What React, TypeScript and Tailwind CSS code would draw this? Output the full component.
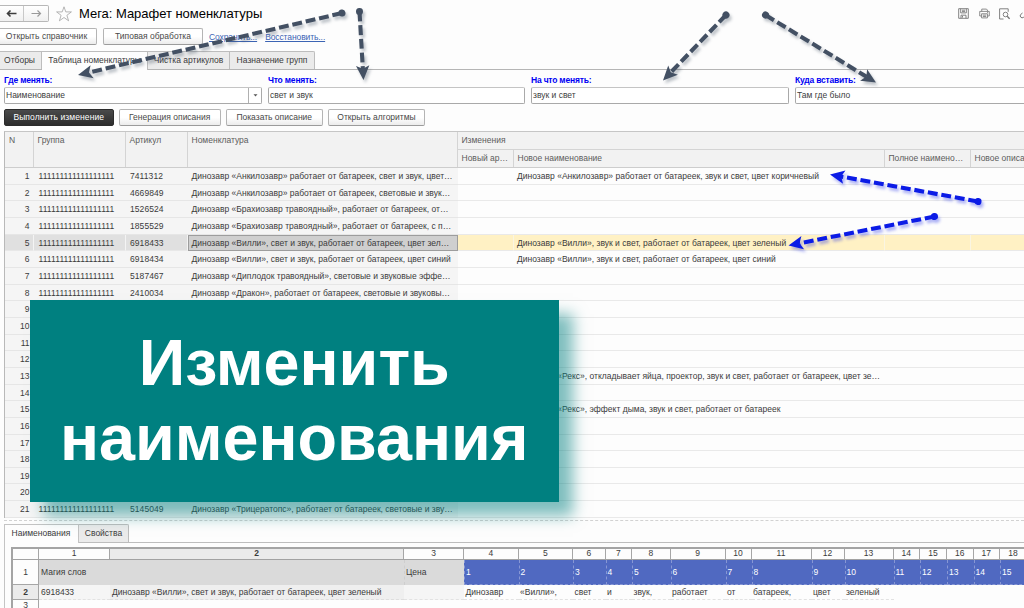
import clsx from "clsx";

type Item = { n: number; article?: string; name?: string; next?: string };

const items: Item[] = [
  { n: 1, article: "7411312", name: "Динозавр «Анкилозавр» работает от батареек, свет и звук, цвет…", next: "Динозавр «Анкилозавр» работает от батареек, звук и свет, цвет коричневый" },
  { n: 2, article: "4669849", name: "Динозавр «Анкилозавр» работает от батареек, световые и звук…" },
  { n: 3, article: "1526524", name: "Динозавр «Брахиозавр травоядный», работает от батареек, от…" },
  { n: 4, article: "1855529", name: "Динозавр «Брахиозавр травоядный», работает от батареек, с п…" },
  { n: 5, article: "6918433", name: "Динозавр «Вилли», свет и звук, работает от батареек, цвет зел…", next: "Динозавр «Вилли», звук и свет, работает от батареек, цвет зеленый" },
  { n: 6, article: "6918434", name: "Динозавр «Вилли», свет и звук, работает от батареек, цвет синий", next: "Динозавр «Вилли», звук и свет, работает от батареек, цвет синий" },
  { n: 7, article: "5187467", name: "Динозавр «Диплодок травоядный», световые и звуковые эффе…" },
  { n: 8, article: "2410034", name: "Динозавр «Дракон», работает от батареек, световые и звуковы…" },
  { n: 9 },
  { n: 10 },
  { n: 11 },
  { n: 12 },
  { n: 13, next: "Динозавр «Рекс», откладывает яйца, проектор, звук и свет, работает от батареек, цвет зе…" },
  { n: 14 },
  { n: 15, next: "Динозавр «Рекс», эффект дыма, звук и свет, работает от батареек" },
  { n: 16 },
  { n: 17 },
  { n: 18 },
  { n: 19 },
  { n: 20 },
  { n: 21, article: "5145049", name: "Динозавр «Трицератопс», работает от батареек, световые и зву…" },
];

const words = [
  { w: "w-[54.5px]", text: "Динозавр" },
  { w: "w-[54.5px]", text: "«Вилли»," },
  { w: "w-[32.5px]", text: "свет" },
  { w: "w-[26.5px]", text: "и" },
  { w: "w-[38.5px]", text: "звук," },
  { w: "w-[55px]", text: "работает" },
  { w: "w-[26px]", text: "от" },
  { w: "w-[60px]", text: "батареек," },
  { w: "w-[33px]", text: "цвет" },
  { w: "w-[49px]", text: "зеленый" },
  { w: "w-[26.5px]", text: "" },
  { w: "w-[27px]", text: "" },
  { w: "w-[26.5px]", text: "" },
  { w: "w-[26.5px]", text: "" },
  { w: "w-[27px]", text: "" },
];

const gridCols =
  "grid grid-cols-[28.5px_92px_62px_270px_56px_371px_86px_80px] w-[1045.5px]";

function Button({ children, className }: { children: string; className: string }) {
  return (
    <button
      className={clsx(
        "h-[17px] shrink-0 rounded-[2px] border border-[#b4b4b4] border-b-[#9c9c9c] bg-linear-to-b from-white from-50% to-[#ececec] text-center leading-[15px] text-[#484848]",
        className
      )}
    >
      {children}
    </button>
  );
}

function Field({ label, value, className, select }: { label: string; value: string; className: string; select?: boolean }) {
  return (
    <div className={clsx("shrink-0", className)}>
      <div className="h-[13px] text-[8.5px] leading-[13px] font-bold tracking-[-0.2px] text-[#0000f5]">{label}</div>
      <div className="flex h-[17px] items-center rounded-[2px] border border-[#a9a9a9] border-t-[#c4c4c4] bg-white pl-[1px] text-[#404040]">
        <span className="grow">{value}</span>
        {select && (
          <span className="flex h-full w-[13px] items-center justify-center border-l border-[#b0b0b0]">
            <svg width="5" height="3" viewBox="0 0 5 3">
              <path d="M0.5 0.2h4L2.5 2.6z" fill="#555" />
            </svg>
          </span>
        )}
      </div>
    </div>
  );
}

function Arrow({ x1, y1, x2, y2, color }: { x1: number; y1: number; x2: number; y2: number; color: string }) {
  const length = Math.hypot(x2 - x1, y2 - y1);
  const angle = (Math.atan2(y2 - y1, x2 - x1) * 180) / Math.PI;
  return (
    <g style={{ filter: `drop-shadow(2px 3px 1.5px ${color}55)` }}>
      <g transform={`translate(${x1} ${y1}) rotate(${angle})`} fill={color}>
        <circle r="3.5" />
        <path d={`M0 0H${length - 11}`} stroke={color} strokeWidth="4.1" strokeDasharray="9.9 3.8" />
        <path d={`M${length} 0l-14.5 -6.7 3.2 6.7 -3.2 6.7z`} />
      </g>
    </g>
  );
}

function TitleBar() {
  return (
    <div className="flex h-[27px] items-center">
      <div className="flex h-[17px] w-[49px] rounded-r-[2px] border border-l-0 border-[#b8b8b8] bg-linear-to-b from-white to-[#f0f0f0]">
        <span className="flex w-[24px] items-center justify-center border-r border-[#c8c8c8] pr-[1px]">
          <svg width="11" height="9" viewBox="0 0 11 9" fill="none" stroke="#3c3c3c" strokeWidth="1.6">
            <path d="M10.5 4.5H1.5M4.5 1.5l-3 3 3 3" />
          </svg>
        </span>
        <span className="flex grow items-center justify-center">
          <svg width="11" height="9" viewBox="0 0 11 9" fill="none" stroke="#999" strokeWidth="1.2">
            <path d="M0.5 4.5H9.5M6.5 1.5l3 3-3 3" />
          </svg>
        </span>
      </div>
      <svg className="ml-[7px]" width="16" height="16" viewBox="0 0 16 16" fill="none" stroke="#a3a3a3" strokeWidth="0.8">
        <path d="M8 0.8l1.8 5.1h5.6l-4.5 3.4 1.7 5.5L8 11.5l-4.6 3.3 1.7-5.5L0.6 5.9h5.6z" />
      </svg>
      <h1 className="ml-[7px] text-[13px] leading-[16px] tracking-[-0.03px] whitespace-nowrap text-black">Мега: Марафет номенклатуры</h1>
      <div className="ml-auto flex w-[66px] shrink-0 items-center gap-[10px] overflow-hidden">
        <svg className="shrink-0" width="11" height="11" viewBox="0 0 11 11" fill="none" stroke="#757575" strokeWidth="0.9">
          <path d="M0.7 0.7h9.6v9.6H0.7zM2.7 0.7v4.2h5.6V0.7M3 10.3V7.2h5v3.1M4 2.2h3M4 3.6h3M4.5 8v1.6" />
        </svg>
        <svg className="shrink-0" width="11" height="11" viewBox="0 0 12 11" fill="none" stroke="#757575" strokeWidth="0.9">
          <path d="M3 3.2V0.7h5.2l1 1v1.5M2.7 8.2H0.8v-5h10.4v5H9.3M2.8 5.8h6.4v4.5H2.8zM4.2 7.3h3.6M4.2 8.8h3.6M8.8 4.5h1" />
        </svg>
        <svg className="-ml-[1px] shrink-0" width="11" height="12" viewBox="0 0 11 12" fill="none" stroke="#757575" strokeWidth="0.9">
          <path d="M4.5 11H0.6V0.8h8.6v3" />
          <circle cx="6.5" cy="6.5" r="2.3" />
          <path d="M8.2 8.2l2.4 2.6" strokeWidth="1.3" />
        </svg>
        <svg className="-ml-[1px] shrink-0" width="11" height="11" viewBox="0 0 11 11" fill="none" stroke="#757575" strokeWidth="1">
          <path d="M3.5 5L1.6 6.6a2 2 0 0 0 2.8 2.8L7 7" />
        </svg>
      </div>
    </div>
  );
}

const tab = "flex items-center justify-center border-t border-r border-[#bdbdbd] bg-[#ebebeb] pb-[1px]";

function ItemRow({ item }: { item: Item }) {
  const current = item.n === 5;
  const left = clsx("overflow-hidden border-b", current ? "border-[#e8e8e8] border-r border-r-[#f4f4f4] bg-[#e0e0e0]" : "border-[#e6e6e6] bg-[#f5f5f5]");
  const right = clsx("overflow-hidden border-b border-[#e9e9e9]", current && "border-r border-r-[#faf5e2] bg-[#fff1c4]");
  return (
    <div className={clsx(gridCols, "h-[16.66px] leading-[16.5px] whitespace-nowrap")}>
      <div className={clsx(left, current ? "pr-[3px]" : "pr-[4px]", "text-right")}>{item.n}</div>
      <div className={clsx(left, "pl-[5px] tracking-[0.08px]")}>{item.article && "111111111111111111"}</div>
      <div className={clsx(left, "pl-[4.5px] tracking-[0.08px]")}>{item.article}</div>
      <div className={clsx("overflow-hidden", current ? "border border-[#9d9d9d] bg-[#cfcfcf] pl-[3px] leading-[14.5px]" : "border-b border-[#e6e6e6] bg-[#f5f5f5] pl-[4px]")}>
        {item.name}
      </div>
      <div className={right} />
      <div className={clsx(right, "pl-[3.5px] tracking-[0.01px]")}>{item.next}</div>
      <div className={right} />
      <div className={right} />
    </div>
  );
}

function ItemsTable() {
  const head = "border-r border-[#d4d4d4] pl-[4px] pt-[2px] leading-[12px]";
  return (
    <div className="ml-[4px] h-[387px] w-[1050px] border border-[#b9b9b9] border-t-[#c6c6c6]">
      <div className={clsx(gridCols, "h-[36px] border-b border-[#cdcdcd] bg-[#f2f2f2] text-[#5c5c5c]")}>
        <div className={head}>N</div>
        <div className={head}>Группа</div>
        <div className={head}>Артикул</div>
        <div className={head}>Номенклатура</div>
        <div className="col-span-4">
          <div className="h-[18px] border-b border-[#d4d4d4] pt-[2px] pl-[4px] leading-[12px]">Изменения</div>
          <div className="grid h-[17px] grid-cols-[56px_371px_86px_80px] whitespace-nowrap">
            <div className={head}>Новый ар…</div>
            <div className={head}>Новое наименование</div>
            <div className={head}>Полное наимено…</div>
            <div className="pt-[2px] pl-[4px] leading-[12px]">Новое описание</div>
          </div>
        </div>
      </div>
      {items.map((item) => (
        <ItemRow key={item.n} item={item} />
      ))}
    </div>
  );
}

function WordsSheet() {
  const head = "shrink-0 border-r border-[#a6a6a6] text-center";
  return (
    <div className="h-[62px] w-[1030px] border-t-2 border-l-2 border-[#a4a4a4] whitespace-nowrap">
      <div className="flex h-[11px] border-b border-[#a2a2a2] leading-[9px]">
        <div className={clsx(head, "w-[26px]")} />
        <div className={clsx(head, "w-[71px]")}>1</div>
        <div className={clsx(head, "w-[294px] bg-[#ebebeb] font-bold")}>2</div>
        <div className={clsx(head, "w-[60px]")}>3</div>
        {words.map((word, i) => (
          <div key={i} className={clsx(head, word.w)}>{i + 4}</div>
        ))}
      </div>
      <div className="flex h-[25px] leading-[24px]">
        <div className={clsx(head, "w-[26px] border-b")}>1</div>
        <div className="w-[365px] shrink-0 bg-[#dadada] pl-[2px]">Магия слов</div>
        <div className="w-[60px] shrink-0 border-l border-dashed border-[#cecece] bg-[#dadada] pl-[1px]">Цена</div>
        {words.map((word, i) => (
          <div key={i} className={clsx(word.w, "shrink-0 border-b border-l border-dashed border-[#8797d4] bg-[#5069c1] pl-[1px] text-white")}>
            {i + 1}
          </div>
        ))}
      </div>
      <div className="flex h-[15px] leading-[15px]">
        <div className={clsx(head, "w-[26px] border-b bg-[#ebebeb] font-bold")}>2</div>
        <div className="w-[71px] shrink-0 border-b border-dashed border-[#e2e2e2] bg-[#f5f5f5] pl-[2px]">6918433</div>
        <div className="w-[294px] shrink-0 border-b border-dashed border-[#dedede] bg-[#efefef] pl-[2px]">
          Динозавр «Вилли», свет и звук, работает от батареек, цвет зеленый
        </div>
        <div className="w-[60px] shrink-0 border-b border-dashed border-[#e2e2e2] bg-[#f5f5f5]" />
        {words.map((word, i) => (
          <div key={i} className={clsx(word.w, "shrink-0 pl-[1.5px]", word.text && "border-b border-dashed border-[#e2e2e2]")}>
            {word.text}
          </div>
        ))}
      </div>
      <div className="h-[10px] w-[26px] border-r border-[#a6a6a6] text-center leading-[10px]">3</div>
    </div>
  );
}

export default function App() {
  return (
    <div className="relative h-[608px] w-[1024px] overflow-hidden bg-[#fdfdfd] font-['Liberation_Sans',Arial,sans-serif] text-[8.5px] text-[#3b3b3b]">
      <TitleBar />

      <div className="flex h-[24px] items-start pt-[1px]">
        <Button className="w-[97px] rounded-l-none border-l-0 pr-[3px] tracking-[0.04px]">Открыть справочник</Button>
        <Button className="ml-[6px] w-[100px]">Типовая обработка</Button>
        <a className="ml-[6px] leading-[18px] tracking-[-0.1px] text-[#3c64b4] underline">Сохранить...</a>
        <a className="ml-[8px] leading-[18px] tracking-[-0.1px] text-[#3c64b4] underline">Восстановить...</a>
      </div>

      <div className="flex h-[19px] border-b border-[#b5b5b5]">
        <div className={clsx(tab, "w-[42px] pr-[2px]")}>Отборы</div>
        <div className="flex h-[19px] w-[106px] items-center justify-center border-t border-r border-[#bdbdbd] bg-[#fdfdfd] pb-[2px]">Таблица номенклатуры</div>
        <div className={clsx(tab, "w-[82px]")}>Чистка артикулов</div>
        <div className={clsx(tab, "w-[85px] rounded-tr-[2px]")}>Назначение групп</div>
      </div>

      <div className="flex gap-[6px] pt-[4px] pl-[4px]">
        <Field className="w-[258px]" label="Где менять:" value="Наименование" select />
        <Field className="w-[257px]" label="Что менять:" value="свет и звук" />
        <Field className="w-[258px]" label="На что менять:" value="звук и свет" />
        <Field className="w-[240px]" label="Куда вставить:" value="Там где было" />
      </div>

      <div className="flex gap-[5.5px] pt-[5px] pb-[5px] pl-[4px]">
        <button className="h-[17px] w-[109.5px] rounded-[2px] border border-[#2b2b2b] bg-linear-to-b from-[#4a4a4a] to-[#2c2c2c] leading-[15px] tracking-[0.1px] whitespace-nowrap text-white">
          Выполнить изменение
        </button>
        <Button className="w-[101.5px]">Генерация описания</Button>
        <Button className="w-[96.5px]">Показать описание</Button>
        <Button className="w-[97px]">Открыть алгоритмы</Button>
      </div>

      <ItemsTable />

      <div className="mt-[2px] ml-[4px] border-t border-dashed border-[#d2d2d2]" />

      <div className="mt-[3px] ml-[4px] flex h-[19px] border-b border-[#bdbdbd]">
        <div className="flex h-[19px] w-[75px] items-center justify-center border-x border-t border-[#c4c4c4] bg-[#fdfdfd] pr-[1px] pb-[2px]">Наименования</div>
        <div className={clsx(tab, "w-[50px] rounded-tr-[2px]")}>Свойства</div>
      </div>

      <div className="ml-[4px] h-[66px] border-l border-[#c4c4c4] pt-[4px] pl-[6px]">
        <WordsSheet />
      </div>

      {/* Caption over the table */}
      <div className="absolute top-[300px] left-[30px] flex h-[201.5px] w-[528.5px] flex-col items-center justify-center bg-[#008080] pb-[1px] text-center text-[64.7px] leading-[75px] font-bold text-white shadow-[14px_14px_14px_rgba(0,128,128,0.5)]">
        <span>Изменить</span>
        <span>наименования</span>
      </div>

      {/* Pointers */}
      <svg className="pointer-events-none absolute inset-0" width="1024" height="608" viewBox="0 0 1024 608">
        <Arrow x1={342} y1={13} x2={78} y2={75} color="#435063" />
        <Arrow x1={359.5} y1={11.5} x2={363.5} y2={80} color="#435063" />
        <Arrow x1={726} y1={15} x2={663} y2={80.5} color="#435063" />
        <Arrow x1={765.5} y1={15} x2={876} y2={82.5} color="#435063" />
        <Arrow x1={978} y1={201.5} x2={830} y2={174.5} color="#0b1be6" />
        <Arrow x1={934.5} y1={216.5} x2={788.5} y2={245.5} color="#0b1be6" />
      </svg>
    </div>
  );
}
